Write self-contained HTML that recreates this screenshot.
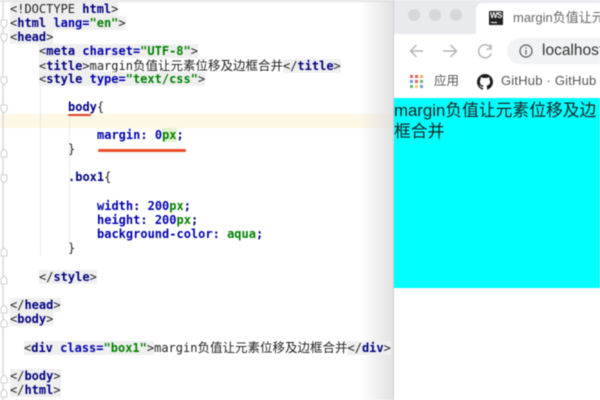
<!DOCTYPE html>
<html><head><meta charset="utf-8">
<style>
html,body{margin:0;padding:0;background:#fff;}
#r{position:relative;width:600px;height:400px;overflow:hidden;background:#fff;filter:blur(.4px);}
.l{position:absolute;white-space:pre;font:12px/14px "DejaVu Sans Mono","Noto Sans CJK SC",monospace;color:#222;}
.l b{color:#000080;font-weight:bold;}
.l i{color:#008000;font-weight:bold;font-style:normal;}
.l u{color:#0000b0;font-weight:bold;text-decoration:none;}
.l s{text-decoration:none;font-size:12.5px;font-family:"Noto Sans CJK SC",sans-serif;}
.g{background:#efefef;}
.a{position:absolute;}
.t{position:absolute;white-space:pre;font-family:"Liberation Sans","Noto Sans CJK SC",sans-serif;}
</style></head><body><div id="r">
<div class="a" style="left:0;top:0;width:395px;height:2px;background:#e6e6e6"></div>
<div class="a" style="left:0;top:114px;width:395px;height:14px;background:#fdf7e6"></div>
<div class="a" style="left:360px;top:0;width:34px;height:400px;background:linear-gradient(90deg,rgba(225,225,225,0),rgba(222,222,222,.9))"></div>
<div class="a" style="left:2px;top:0;width:2px;height:400px;background:#e2e2e2"></div>
<div class="a" style="left:40px;top:86px;width:1px;height:170px;background:#e8e8e8"></div>
<div class="a" style="left:69px;top:116px;width:1px;height:126px;background:#e8e8e8"></div>
<svg class="a" style="left:0;top:0" width="10" height="400" fill="#fff" stroke="#cfcfcf">
<path d="M1 20h6v5l-3 3-3-3zM1 34h6v5l-3 3-3-3zM1 77h6v5l-3 3-3-3zM1 105h6v5l-3 3-3-3zM1 175h6v5l-3 3-3-3zM1 152l3-3 3 3v5H1zM1 251l3-3 3 3v5H1zM1 279l3-3 3 3v5H1zM1 308l3-3 3 3v5H1zM1 322l3-3 3 3v5H1zM1 378l3-3 3 3v5H1zM1 392l3-3 3 3v5H1z"/>
</svg>

<div class="l g" style="left:10px;top:2px">&lt;!DOCTYPE <b>html</b>&gt;</div>
<div class="l g" style="left:10px;top:16px">&lt;<b>html</b> <u>lang=</u><i>"en"</i>&gt;</div>
<div class="l g" style="left:10px;top:30px">&lt;<b>head</b>&gt;</div>
<div class="l g" style="left:39px;top:44px">&lt;<b>meta</b> <u>charset=</u><i>"UTF-8"</i>&gt;</div>
<div class="l" style="left:39px;top:58px"><span class="g">&lt;<b>title</b>&gt;</span>margin<s>负值让元素位移及边框合并</s><span class="g">&lt;/<b>title</b>&gt;</span></div>
<div class="l g" style="left:39px;top:72px">&lt;<b>style</b> <u>type=</u><i>"text/css"</i>&gt;</div>
<div class="l" style="left:68px;top:100px"><b>body</b>{</div>
<div class="l" style="left:97px;top:128px"><u>margin</u><b>:</b> <u>0</u><i style="background:#e4f2d0">px</i><b>;</b></div>
<div class="l" style="left:68px;top:142px">}</div>
<div class="l" style="left:68px;top:170px"><b>.box1</b>{</div>
<div class="l" style="left:97px;top:199px"><u>width</u><b>:</b> <u>200</u><i>px</i><b>;</b></div>
<div class="l" style="left:97px;top:213px"><u>height</u><b>:</b> <u>200</u><i>px</i><b>;</b></div>
<div class="l" style="left:97px;top:227px"><u>background-color</u><b>:</b> <i>aqua</i><b>;</b></div>
<div class="l" style="left:68px;top:241px">}</div>
<div class="l g" style="left:39px;top:270px">&lt;/<b>style</b>&gt;</div>
<div class="l g" style="left:10px;top:298px">&lt;/<b>head</b>&gt;</div>
<div class="l g" style="left:10px;top:312px">&lt;<b>body</b>&gt;</div>
<div class="l" style="left:24px;top:340px"><span class="g">&lt;<b>div</b> <u>class=</u><i>"box1"</i>&gt;</span>margin<s>负值让元素位移及边框合并</s><span class="g">&lt;/<b>div</b>&gt;</span></div>
<div class="l g" style="left:10px;top:369px">&lt;/<b>body</b>&gt;</div>
<div class="l g" style="left:10px;top:383px">&lt;/<b>html</b>&gt;</div>

<div class="a" style="left:68px;top:114px;width:23px;height:2px;background:#e0402a;border-radius:1px"></div>
<div class="a" style="left:98px;top:149px;width:88px;height:3px;background:#e8512a;border-radius:1px"></div>

<div class="a" style="left:393px;top:0;width:1px;height:400px;background:#cfcfcf"></div>
<div class="a" style="left:394px;top:0;width:206px;height:400px;background:#fff"></div>
<div class="a" style="left:394px;top:0;width:206px;height:34px;background:#e8eaed"></div>
<div class="a" style="left:476px;top:3px;width:124px;height:31px;background:#fff;border-radius:7px 0 0 0"></div>
<div class="a" style="left:394px;top:34px;width:206px;height:64px;background:#fff"></div>
<div class="a" style="left:408px;top:9px;width:12px;height:12px;border-radius:50%;background:#d6d7d9"></div>
<div class="a" style="left:429px;top:9px;width:12px;height:12px;border-radius:50%;background:#d6d7d9"></div>
<div class="a" style="left:450px;top:9px;width:12px;height:12px;border-radius:50%;background:#d6d7d9"></div>
<div class="a" style="left:489px;top:11px;width:14px;height:14px;background:#222"></div>
<div class="t" style="left:490px;top:11px;font-size:8px;line-height:10px;font-weight:bold;color:#fff;letter-spacing:-.5px">WS</div>
<div class="a" style="left:491px;top:22px;width:6px;height:1px;background:#fff"></div>
<div class="t" style="left:513px;top:10px;font-size:13px;line-height:16px;color:#666">margin负值让元</div>

<svg class="a" style="left:394px;top:33px" width="110" height="36" fill="none" stroke="#b5b5b5" stroke-width="1.5">
<path d="M29 18H16.500M22.500 12l-6 6 6 6"/>
<path d="M49 18h13.500M56.500 12l6 6-6 6"/>
<path d="M96.500 14.500a6.500 6.500 0 1 0 .8 6M97 11.500v4.500h-4.500"/>
</svg>
<div class="a" style="left:507px;top:38px;width:110px;height:26px;border-radius:13px;background:#f1f3f4"></div>
<svg class="a" style="left:518px;top:43px" width="16" height="16" fill="none" stroke="#555" stroke-width="1.200">
<circle cx="8" cy="8" r="6"/><path d="M8 7v4.500M8 4.500v1.300"/>
</svg>
<div class="t" style="left:542px;top:42px;font-size:15.500px;line-height:18px;color:#333">localhost</div>

<svg class="a" style="left:410px;top:75px" width="15" height="15" opacity=".85">
<g fill="#d9483b"><rect x="0" y="0" width="3" height="3"/><rect x="5" y="0" width="3" height="3"/></g><rect x="10" y="0" width="3" height="3" fill="#e9a23b"/>
<g fill="#4a8bdc"><rect x="0" y="5" width="3" height="3"/></g><rect x="5" y="5" width="3" height="3" fill="#d9483b"/><rect x="10" y="5" width="3" height="3" fill="#4fa65b"/>
<rect x="0" y="10" width="3" height="3" fill="#4fa65b"/><rect x="5" y="10" width="3" height="3" fill="#e9c53b"/><rect x="10" y="10" width="3" height="3" fill="#4a8bdc"/>
</svg>
<div class="t" style="left:434px;top:73px;font-size:12.500px;line-height:16px;color:#555">应用</div>
<svg class="a" style="left:477px;top:74px" width="16" height="16" viewBox="0 0 16 16"><path fill="#1b1b1b" d="M8 0C3.580 0 0 3.580 0 8c0 3.540 2.290 6.530 5.470 7.590.4.070.55-.17.55-.38 0-.19-.01-.82-.01-1.490-2.010.37-2.530-.49-2.690-.94-.09-.23-.48-.94-.82-1.130-.28-.15-.68-.52-.01-.53.630-.01 1.080.58 1.230.82.720 1.210 1.870.87 2.330.66.070-.52.280-.87.510-1.070-1.780-.2-3.640-.89-3.640-3.950 0-.87.310-1.590.820-2.150-.08-.2-.36-1.020.08-2.120 0 0 .67-.21 2.200.82.640-.18 1.320-.27 2-.27s1.360.09 2 .27c1.530-1.040 2.200-.82 2.200-.82.440 1.100.16 1.920.08 2.120.51.560.82 1.270.82 2.150 0 3.070-1.870 3.750-3.650 3.950.29.250.54.730.54 1.480 0 1.070-.01 1.930-.01 2.200 0 .21.150.46.550.38A8.010 8.010 0 0 0 16 8c0-4.420-3.580-8-8-8z"/></svg>
<div class="t" style="left:501px;top:73px;font-size:13px;line-height:16px;color:#555;letter-spacing:.2px">GitHub · GitHub</div>

<div class="a" style="left:394px;top:98px;width:206px;height:190px;background:#0ff"></div>
<div class="t" style="left:394px;top:100px;font-size:16.800px;line-height:21px;color:#222">margin负值让元素位移及边
框合并</div>
</div></body></html>
